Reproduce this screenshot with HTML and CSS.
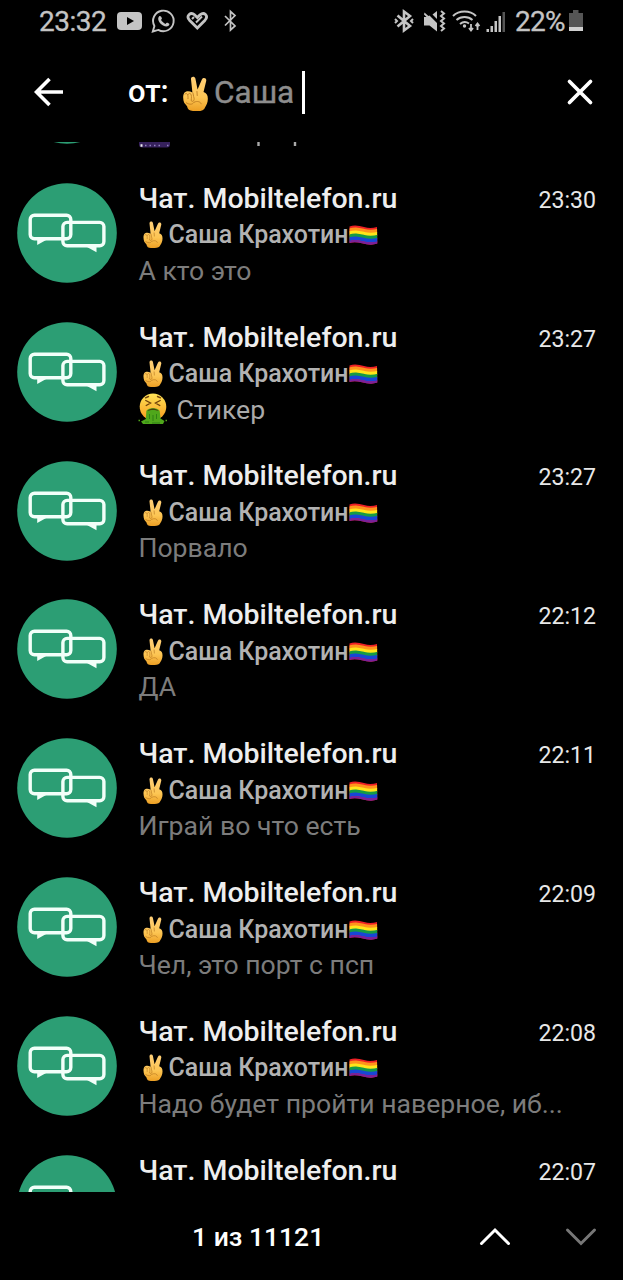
FILE: index.html
```html
<!DOCTYPE html>
<html lang="ru">
<head>
<meta charset="utf-8">
<title>Поиск сообщений</title>
<link rel="stylesheet" href="styles.css">
</head>
<body>
<svg class="defs" aria-hidden="true">
  <defs>
    <linearGradient id="skin" x1="0" y1="0" x2="0" y2="1"><stop offset="0" stop-color="#ffcf78"/><stop offset=".6" stop-color="#fdc654"/><stop offset="1" stop-color="#ec9f24"/></linearGradient>
    <linearGradient id="face" x1="0" y1="0" x2="0" y2="1"><stop offset="0" stop-color="#ffe457"/><stop offset="1" stop-color="#f79a1e"/></linearGradient>
    <symbol id="chat" viewBox="0 0 100 100">
      <circle cx="50" cy="50" r="49.8" fill="#2c9e74"/>
      <g fill="none" stroke="#f2fff9" stroke-width="3.4">
        <rect x="13.2" y="32.3" width="40.6" height="23.4" rx="4.2"/>
        <rect x="45.900" y="39.400" width="41" height="23.400" rx="4.2"/>
      </g>
      <path d="M20.200 56.500V62L30 56.500ZM70 64L79.500 69.200V64Z" fill="#f2fff9"/>
    </symbol>
    <symbol id="victory" viewBox="0 0 24 34">
      <path d="M9 16L7.600 3C7.500 .2 11.200 -.2 11.900 2.500L14 13L18.200 3.500C19.500 .8 23 2 22.400 4.800L19.800 15.500C22.800 16.500 24 18.500 24 22C24 26 22.500 28 21.500 30C20.500 33 18 34 14 34H9.500C6 34 4.300 32.500 3.800 29.500L1 26C-.3 23 -.3 18.500 1 16.500C2.500 14.500 6 14.500 9 16Z" fill="url(#skin)"/>
      <path d="M1.800 17.500C4 16 5 18 4.700 22M4.700 18C6.500 15.500 8.500 17 8 22L7.800 24C10 26 11.500 23 10.200 20L9.500 16.500M3 26C6 28 9 28 10.500 25.500C14 24 17 25 17.500 27M13.400 15L13.700 19" fill="none" stroke="#b87720" stroke-width=".8" stroke-linecap="round"/>
    </symbol>
    <symbol id="pride" viewBox="0 0 29 20" preserveAspectRatio="none">
      <clipPath id="wave"><path d="M.5 1.500C5-.5 10 .5 15 2C20 3.500 24 3 28 2L28.300 18.500C23 20.500 18 19.500 13 18.200C8 17 4 16.800 .5 18Z"/></clipPath>
      <g clip-path="url(#wave)" fill="none" stroke-width="3.700">
        <path d="M0 0H29V20H0Z" fill="#ee2025"/>
        <path d="M-1 6C5 3 10 4.500 15 5.800S24 7 30 5.500" stroke="#ff941c"/>
        <path d="M-1 9C5 6 10 7.500 15 8.800S24 10 30 8.500" stroke="#ffe51a"/>
        <path d="M-1 12C5 9 10 10.500 15 11.800S24 13 30 11.500" stroke="#159b46"/>
        <path d="M-1 15C5 12 10 13.500 15 14.800S24 16 30 14.500" stroke="#1747d6"/>
        <path d="M-1 18.500C5 15.500 10 17 15 18.300S24 19.500 30 18" stroke="#79209b"/>
      </g>
    </symbol>
    <symbol id="sick" viewBox="0 0 30 32">
      <circle cx="15" cy="13.800" r="13.300" fill="url(#face)"/>
      <path d="M7.500 4.800L10.500 3.500M19.500 3.500L22.500 4.800M7.800 7.500L12.500 10L8.200 12.500M22.200 7.500L17.500 10L21.800 12.500" fill="none" stroke="#70410b" stroke-width="1.400" stroke-linecap="round"/>
      <path d="M8.300 19C8 14 22 14 21.800 19L22.500 25.500L26.500 28L25 31H5L3 28.500L7.800 26Z" fill="#4fa71b"/>
      <path d="M9.500 18C11.500 14.600 18.500 14.600 20.500 18C17.500 16.500 12.500 16.500 9.500 18Z" fill="#47430d"/>
      <path d="M11.500 21V26M15 22V28M18.500 21V26M7 29H11M14 30H22" stroke="#2f7f14" stroke-width="1"/>
      <path d="M.5 27.500H2M27.500 27.500H29" stroke="#4fa71b" stroke-width="1.500"/>
    </symbol>
  </defs>
</svg>

<div class="screen">
  <div class="status">
    <span class="clock">23:32</span>
    <svg class="left-icons" width="124" height="28" viewBox="0 0 124 28">
      <rect x="2" y="5" width="25" height="18" rx="4" fill="#c4c4c4"/><path d="M12 10V18L19 14Z"/>
      <g fill="none" stroke="#c4c4c4">
        <path d="M37.800 24.500L39.400 19A10.300 10.300 0 1 1 43.300 22.900Z" stroke-width="1.900"/>
        <path d="M44 9.500C45 8.500 46 9 47 11.500C45.500 13 46 14 50.500 17C52 15 52.500 15.500 54.500 17C53.500 20 51 20 48 18.500C44 16 42 12 44 9.500Z" fill="#c4c4c4" stroke="none"/>
        <path d="M82.300 21L74.500 13.200C70.500 8.500 76 4.500 79.500 7.800L82.300 10.500L85 7.800C89 4.500 94 8.500 90 13.200L82.300 21Z" stroke-width="2.800"/>
        <path d="M77 12L79 10M81 15.500L87 9.500" stroke-width="2"/>
        <path d="M110 9L120 19L115.500 23V4.500L120 8.500L110 18.500" stroke-width="1.700"/>
      </g>
    </svg>
    <svg class="right-icons" width="114" height="28" viewBox="0 0 114 28">
      <g fill="none" stroke="#c4c4c4">
        <path d="M4.500 8.500L17 19L11 23.500V4.500L17 9L4.500 19.500" stroke-width="2.600"/>
        <path d="M2 12L4 14L2 16M20 12L18 14L20 16" stroke-width="2"/>
      </g>
      <path d="M31 10H33L36.500 8.500L44 16V24.500L36.500 18.500H31ZM39.500 7.500L44 4V12ZM31.500 5.500L36.500 10L35 11.500L31 7.500Z" fill="#c4c4c4"/>
      <g fill="none" stroke="#c4c4c4">
        <path d="M48 4L51 6.500L48 9L51 11.500L48 14L51 16.500L48 19L51 21.500L48 24" stroke-width="2"/>
        <path d="M60 9C66 3 77 3 83 9M63.500 13C68 9 75 9 79.500 13M67 17C70 14.500 73 14.500 76 16.500" stroke-width="2"/>
        <path d="M78 17V23M76 21L78 23.500L80 21M84.500 23V17M82.500 19L84.500 16.500L86.500 19" stroke-width="1.800"/>
      </g>
      <circle cx="71.500" cy="19" r="1.700" fill="#c4c4c4"/>
      <path d="M93.500 22H96V25H93.500ZM97.500 19H100V25H97.500ZM101.500 14H104V25H101.500ZM105.500 9H108V25H105.500Z" fill="#c4c4c4"/>
      <path d="M109.500 5H112V25H109.500Z" fill="#555"/>
    </svg>
    <span class="percent">22%</span>
    <svg class="battery" width="16" height="24" viewBox="0 0 16 24"><path d="M1 3H5V0H10.500V3H15V17H1Z" fill="#555"/><path d="M1 17H15V21H1Z" fill="#d0d0d0"/></svg>
  </div>

  <div class="search">
    <svg class="back" width="30" height="30" viewBox="0 0 30 30"><path d="M29 15H3M15.500 2L2.500 15L15.500 28" fill="none" stroke="#fff" stroke-width="3.600"/></svg>
    <span class="from">от:</span>
    <svg class="victory-large"><use href="#victory"/></svg>
    <span class="query">Саша</span>
    <span class="caret"></span>
    <svg class="close" width="28" height="28" viewBox="0 0 28 28"><path d="M3.500 3.500L24.500 24.500M24.500 3.500L3.500 24.500" stroke="#fff" stroke-width="3.700" stroke-linecap="round"/></svg>
  </div>

  <div class="list" id="list">
    <div class="row previous">
      <svg class="avatar"><use href="#chat"/></svg>
      <div class="remnant">
        <svg width="160" height="6" viewBox="0 0 160 6"><path d="M0 0H31V2.500Q31 5.500 28 5.500H3Q0 5.500 0 2.500Z" fill="#36215c"/><path d="M1.500 3.500H3.500" stroke="#eee" stroke-width="2.500"/><path d="M6 3.500H22M28 3.500H30" stroke="#9080bd" stroke-width="1.400" stroke-dasharray="1.500 3"/><path d="M119.500 0V4M156 0V4" stroke="#aaa" stroke-width="2.400"/></svg>
      </div>
    </div>
  </div>

  <div class="footer">
    <span class="count">1 из 11121</span>
    <svg class="up" width="32" height="20" viewBox="0 0 32 20"><path d="M2.500 16.500L16 3L29.500 16.500" fill="none" stroke="#fff" stroke-width="3" stroke-linecap="round"/></svg>
    <svg class="down" width="32" height="20" viewBox="0 0 32 20"><path d="M2.500 3L16 16.500L29.500 3" fill="none" stroke="#777" stroke-width="3" stroke-linecap="round"/></svg>
  </div>
</div>
<script src="app.js"></script>
</body>
</html>
```
FILE: styles.css
```css
* { box-sizing: border-box; }
body { margin: 0; background: #000; color: #fff; font-family: Roboto, sans-serif; }
.defs { position: absolute; width: 0; height: 0; }
svg { display: block; flex: none; }
span { white-space: nowrap; }
.screen { display: flex; flex-direction: column; width: 623px; height: 1280px; overflow: hidden; }
.status { display: flex; align-items: center; height: 43px; padding-left: 39px; color: #c4c4c4; }
.clock { width: 76px; font-size: 28px; line-height: 43px; letter-spacing: -.5px; -webkit-text-stroke: .3px #c4c4c4; }
.left-icons { margin-top: -2px; }
.right-icons { margin: -2px 0 0 154px; }
.percent { width: 60px; margin-left: 8px; font-size: 28px; line-height: 43px; letter-spacing: -.7px; -webkit-text-stroke: .3px #c4c4c4; }
.battery { margin-left: -7px; }
.search { display: flex; align-items: center; height: 99px; padding: 0 0 1px 34px; }
.from { width: 47px; margin-left: 64px; font-size: 31px; line-height: 36px; font-weight: 500; }
.victory-large { width: 25px; height: 35px; margin-left: 8px; margin-top: 2px; }
.query { width: 81px; margin-left: 6px; font-size: 31.500px; color: #8d8d8d; -webkit-text-stroke: .4px #8d8d8d; }
.caret { width: 3px; height: 43px; margin-left: 7px; background: #fff; }
.close { margin-left: 261px; }
.list { display: flex; flex-direction: column; height: 1050px; overflow: hidden; }
.row { display: flex; flex: none; align-items: flex-start; height: 138.83px; padding: 16.1px 27px 0 17.4px; }
.avatar { width: 100px; height: 100px; margin-top: 3.200px; }
.previous { margin-top: -117.2px; }
.remnant { padding: 100.900px 0 0 21.600px; }
.body { flex: 1; min-width: 0; padding-left: 21.100px; }
.head { display: flex; justify-content: space-between; height: 37px; line-height: 37px; }
.title { font-size: 28.500px; font-weight: 500; color: #eee; }
.time { font-size: 23.100px; line-height: 42px; color: #e8e8e8; }
.author { display: flex; align-items: center; height: 36.500px; font-size: 24.950px; font-weight: 500; color: #b2b2b2; }
.victory { width: 20px; height: 27px; margin: 0 5.500px 0 4.500px; }
.flag { width: 29px; height: 20px; margin-top: 1px; margin-left: .5px; }
.message { display: flex; align-items: center; height: 34px; font-size: 26.600px; color: #7c7c7c; }
.sick { width: 30px; height: 32px; margin-right: 8px; }
.sticker { color: #aaa; }
.footer { display: flex; align-items: center; height: 88px; padding: 2px 0 0 192px; }
.count { width: 134px; margin-top: -1px; font-size: 26.500px; font-weight: 500; }
.up { margin-left: 153px; }
.down { margin-left: 54px; }
```
FILE: app.js
```js
const messages = [
  ["23:30", "А кто это"],
  ["23:27", "Стикер", true],
  ["23:27", "Порвало"],
  ["22:12", "ДА"],
  ["22:11", "Играй во что есть"],
  ["22:09", "Чел, это порт с псп"],
  ["22:08", "Надо будет пройти наверное, иб..."],
  ["22:07", ""]
];
document.getElementById("list").insertAdjacentHTML("beforeend", messages.map(([time, text, sticker]) => `
  <div class="row">
    <svg class="avatar"><use href="#chat"/></svg>
    <div class="body">
      <div class="head"><span class="title">Чат. Mobiltelefon.ru</span><span class="time">${time}</span></div>
      ${text ? `<div class="author"><svg class="victory"><use href="#victory"/></svg><span class="name">Саша Крахотин</span><svg class="flag"><use href="#pride"/></svg></div>
      <div class="message${sticker ? " sticker" : ""}">${sticker ? '<svg class="sick"><use href="#sick"/></svg>' : ""}<span>${text}</span></div>` : ""}
    </div>
  </div>`).join(""));
```
